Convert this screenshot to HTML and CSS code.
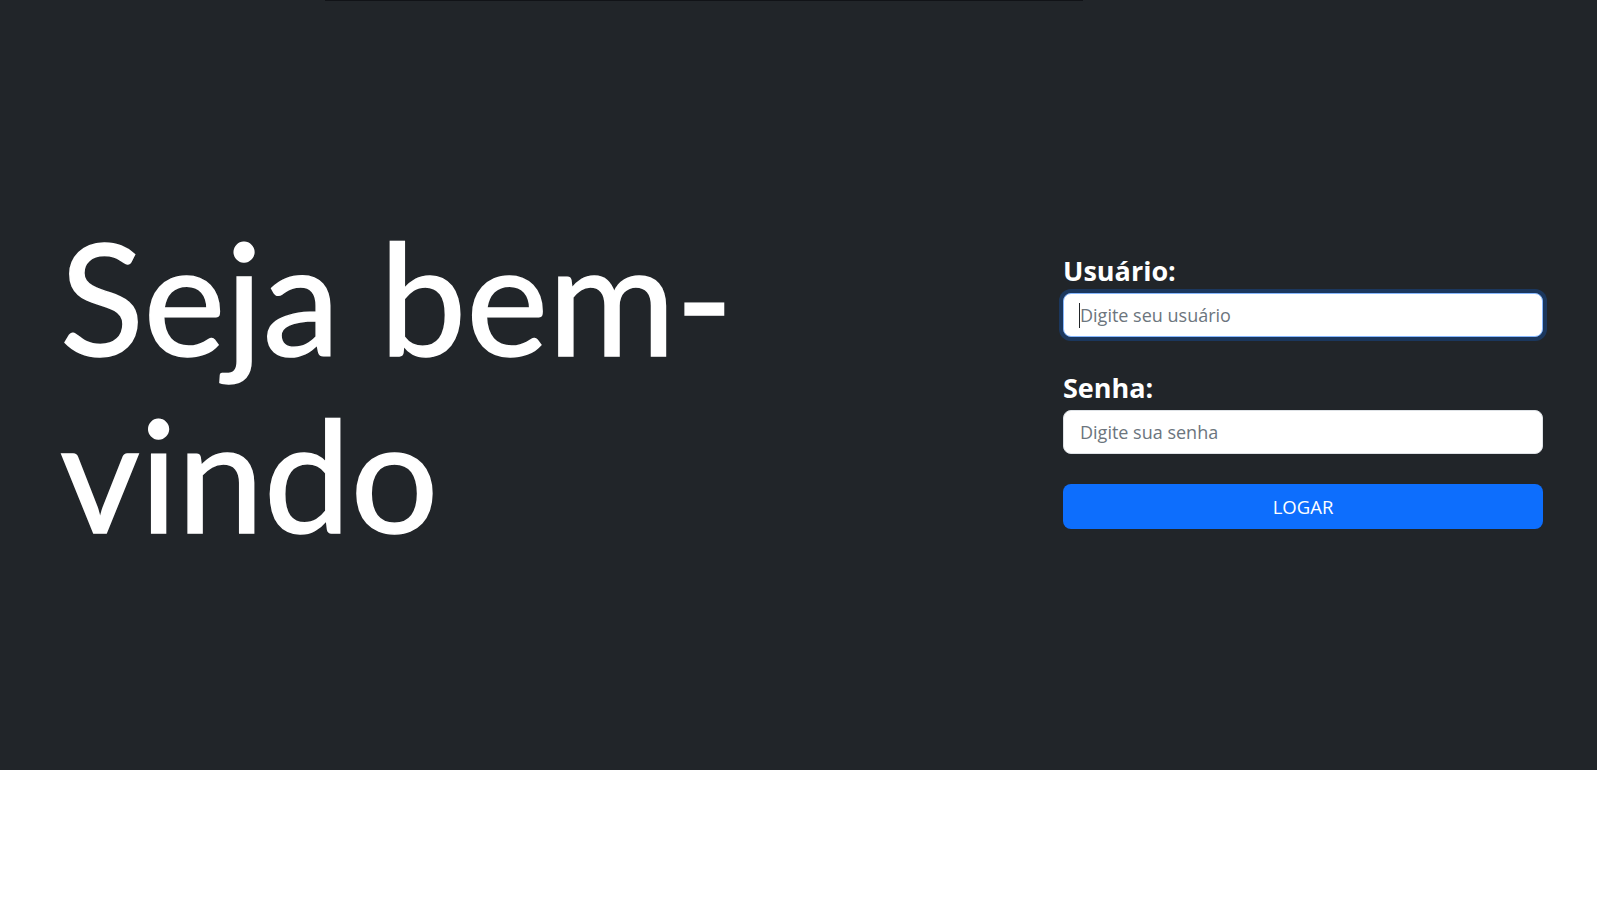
FILE: index.html
```html
<!DOCTYPE html>
<html lang="pt-BR">
<head>
<meta charset="utf-8">
<title>Login</title>
<link rel="stylesheet" href="styles.css">
</head>
<body>
<main class="hero">
  <section class="hero-left">
    <h1 class="hero-title">Seja bem-vindo</h1>
  </section>
  <form class="login" action="#">
    <label class="field-label" for="usuario">Usuário:</label>
    <div class="field">
      <input class="field-input is-focused" id="usuario" type="text" placeholder="Digite seu usuário">
      <span class="caret"></span>
    </div>
    <label class="field-label" for="senha">Senha:</label>
    <div class="field field-last">
      <input class="field-input" id="senha" type="password" placeholder="Digite sua senha">
    </div>
    <button class="btn-login" type="button">LOGAR</button>
  </form>
</main>
</body>
</html>
```
FILE: styles.css
```css
* { box-sizing: border-box; }
html, body { margin: 0; padding: 0; background: #ffffff; }
body { font-family: "Open Sans", "Noto Sans", sans-serif; }

.hero {
  position: relative;
  height: 770px;
  margin-right: 3px;
  background: #212529;
  color: #ffffff;
  display: flex;
  align-items: center;
  padding: 0 54px 0 60px;
}
.hero::before {
  content: "";
  position: absolute;
  top: 0;
  left: 325px;
  width: 758px;
  height: 1px;
  background: #111317;
}

.hero-left { flex: 1; min-width: 0; }
.hero-title {
  margin: 0;
  font-family: Lato, "Open Sans", sans-serif;
  font-size: 155px;
  line-height: 177px;
  font-weight: 400;
  -webkit-text-stroke: 1.5px #ffffff;
  max-width: 900px;
}

.login {
  flex: none;
  width: 480px;
  display: flex;
  flex-direction: column;
  padding-top: 12px;
}
.field-label {
  font-size: 27px;
  line-height: 34px;
  font-weight: 700;
  margin-bottom: 5px;
}
.field {
  position: relative;
  display: flex;
  flex-direction: column;
  margin-bottom: 34px;
}
.field-last { margin-bottom: 30px; }
.field-input {
  height: 44px;
  padding: 0 16px;
  border: 1px solid #dee2e6;
  border-radius: 8px;
  background: #ffffff;
  color: #212529;
  font-family: inherit;
  font-size: 18px;
  outline: none;
}
.field-input::placeholder { color: #6c757d; }
.field-input.is-focused, .field-input:focus {
  border-color: #86b7fe;
  box-shadow: 0 0 0 4px rgba(13, 110, 253, 0.25);
}
.caret {
  position: absolute;
  left: 16px;
  top: 10px;
  width: 1px;
  height: 25px;
  background: #212529;
}

.btn-login {
  height: 45px;
  border: 0;
  border-radius: 8px;
  background: #0d6efd;
  color: #ffffff;
  font-family: inherit;
  font-size: 18.5px;
  cursor: pointer;
}
```
